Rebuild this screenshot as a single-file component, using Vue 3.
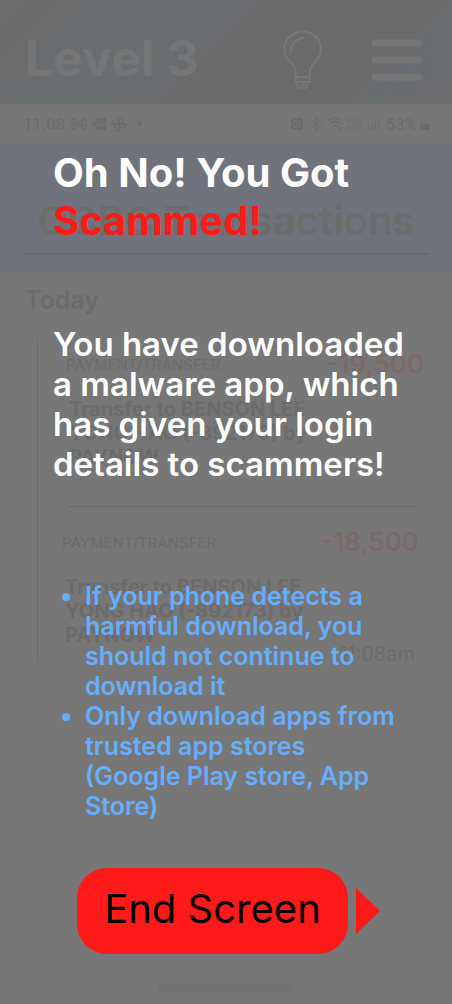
<script setup>
const transactions = [
  { id: 1, amount: '-19,500', time: '' },
  { id: 2, amount: '-18,500', time: '11:08am' },
]

const tips = [
  'If your phone detects a harmful download, you should not continue to download it',
  'Only download apps from trusted app stores (Google Play store, App Store)',
]
</script>

<template>
  <div class="screen">
    <div class="backdrop">
      <header class="topbar">
        <h2 class="level">Level 3</h2>
        <button class="icon-button bulb-button" type="button" aria-label="Hint">
          <svg class="bulb" viewBox="0 -1 40 60" fill="none" stroke="currentColor" stroke-width="2" stroke-linecap="round" stroke-linejoin="round">
            <path d="M12.500 46V40C12.500 36 9 33 6 30C-1 22 0 11 7 5.500C15-1 25-1 32 5C39 11 40 22 33 30C30 34 27 36 27 40V46L26 52L23 57H16L13 52Z" />
            <path d="M13 46H27M13 51H26M18 54H22" />
            <path d="M8 21C8 13 13 8 20 7" />
          </svg>
        </button>
        <button class="icon-button" type="button" aria-label="Menu">
          <svg class="menu" viewBox="0 0 52 42" stroke="currentColor" stroke-width="7" stroke-linecap="round">
            <path d="M4 4H48M4 21H48M4 38H48" />
          </svg>
        </button>
      </header>

      <div class="status">
        <div class="status-group">
          <span class="clock">11:08</span>
          <svg class="status-icon" viewBox="0 0 16 16" fill="none" stroke="currentColor" stroke-width="1.300">
            <path d="M1 13V3H3L8 8L13 3H15V13H12V8L8 11L4 8V13Z" />
          </svg>
          <svg class="status-icon" viewBox="0 0 16 16">
            <path d="M5 2H15V14H5V11H1V5H5Z" fill="currentColor" />
            <circle cx="4" cy="8" r="2" fill="none" stroke="#777" />
            <path d="M8 8L12 10L15 7" fill="none" stroke="#777" />
          </svg>
          <svg class="status-icon" viewBox="0 0 16 16" fill="none" stroke="currentColor" stroke-width="1.300">
            <path d="M8 8V1C12 1 13 5 11 8ZM8 8H15C15 12 11 13 8 11ZM8 8V15C4 15 3 11 5 8ZM8 8H1C1 4 5 3 8 5Z" />
          </svg>
          <span class="dot"></span>
        </div>
        <div class="status-group status-right">
          <svg class="status-icon" viewBox="0 0 16 16">
            <path d="M3 2L13 2L14 5V12L12 14H4L2 12V5Z" fill="currentColor" />
            <circle cx="8" cy="8" r="4" fill="none" stroke="#777" />
            <path d="M8 5V8H11" fill="none" stroke="#777" />
          </svg>
          <svg class="status-icon" viewBox="0 0 16 16" fill="none" stroke="currentColor" stroke-width="1.300">
            <path d="M4 4L12 11L8 15V1L12 5L4 12M1 8H3M13 8H15" />
          </svg>
          <svg class="status-icon" viewBox="0 0 16 16" fill="none" stroke="currentColor" stroke-width="1.300">
            <path d="M1 5C5 1 11 1 15 5M3 8C6 5 10 5 13 8M5 11C7 9 9 9 11 11M8 13V14M12 11V15M14 11V15" />
          </svg>
          <span class="carrier"><span>Vo))</span><span>LTE1</span></span>
          <svg class="status-icon" viewBox="0 0 16 16" fill="currentColor">
            <path d="M3 11H4V14H3ZM6 8H7V14H6ZM9 5H10V14H9ZM12 2H13V14H12Z" />
          </svg>
          <span class="battery-text">53%</span>
          <svg class="battery" viewBox="0 0 10 14" fill="currentColor">
            <path d="M0 7H10V12Q10 13 9 13H1Q0 13 0 12Z" />
            <path d="M3 1H7V3H9V7H1V3H3Z" opacity=".35" />
          </svg>
        </div>
      </div>

      <div class="bank">
        <h2 class="bank-title">OCBC Transactions</h2>
      </div>

      <h3 class="today">Today</h3>
      <ul class="transactions">
        <li v-for="item in transactions" :key="item.id" class="transaction">
          <div class="transaction-head">
            <span class="kind">PAYMENT/TRANSFER</span>
            <span class="amount">{{ item.amount }}</span>
          </div>
          <p class="detail">Transfer to BENSON LEE YONG HAO (-892173) by PAYNOW</p>
          <span v-if="item.time" class="time">{{ item.time }}</span>
        </li>
      </ul>
      <div class="home-bar"></div>
    </div>

    <main class="result">
      <h1 class="title">Oh No! You Got <span class="danger">Scammed!</span></h1>
      <p class="message">You have downloaded a malware app, which has given your login details to scammers!</p>
      <ul class="tips">
        <li v-for="tip in tips" :key="tip">{{ tip }}</li>
      </ul>
      <div class="actions">
        <button class="end" type="button">End Screen</button>
        <svg class="arrow" viewBox="0 0 24 46" aria-hidden="true">
          <path d="M0 0L24 23L0 46Z" fill="#ff1a1a" />
        </svg>
      </div>
    </main>
  </div>
</template>

<style>
body {
  background: #777777;
}
</style>

<style scoped>
.screen {
  display: grid;
  min-height: 100vh;
  background: #777777;
  font-family: Inter, "Liberation Sans", sans-serif;
}

.backdrop,
.result {
  grid-area: 1 / 1;
  min-width: 0;
}

h1, h2, h3, p, ul {
  margin: 0;
  padding: 0;
}

button {
  border: 0;
  font: inherit;
}

.backdrop {
  display: flex;
  flex-direction: column;
  color: #6c6c6c;
}

.topbar {
  display: flex;
  align-items: center;
  height: 104px;
  padding: 0 15px 0 25px;
  background: linear-gradient(135deg, #6c6b6d 0%, #6b6c6e 16%, #696e71 23%, #696e71 38%, #6b6b6d 50%, #6b6b6d 80%, #696e71 86%, #6b6c6e 100%);
  color: #767676;
}

.level {
  flex: 1;
  padding-top: 12px;
  font-size: 50px;
  line-height: 60px;
  font-weight: 700;
}

.icon-button {
  display: flex;
  align-items: center;
  justify-content: center;
  width: 80px;
  height: 72px;
  padding: 0;
  border-radius: 16px;
  background: rgba(106, 106, 110, 0.3);
  color: #767676;
}

.bulb-button {
  margin-right: 14px;
}

.topbar .icon-button {
  margin-top: 16px;
}

.bulb {
  width: 40px;
  height: 60px;
}

.menu {
  width: 52px;
  height: 42px;
}

.status {
  display: flex;
  justify-content: space-between;
  align-items: center;
  height: 39px;
  padding: 0 22px 0 23px;
  font-family: Roboto, sans-serif;
}

.status-group {
  display: flex;
  align-items: center;
  gap: 4px;
}

.status-right {
  gap: 3px;
}

.clock {
  margin-right: 2px;
}

.clock,
.battery-text {
  font-size: 17px;
}

.status-icon {
  width: 16px;
  height: 16px;
}

.dot {
  width: 5px;
  height: 5px;
  margin-left: 6px;
  border-radius: 50%;
  background: currentColor;
}

.carrier {
  display: flex;
  flex-direction: column;
  font-size: 8px;
  line-height: 7px;
}

.battery {
  width: 10px;
  height: 14px;
}

.bank {
  height: 130px;
  padding: 0 23px;
  background: #70737b;
}

.bank-title {
  padding: 54px 0 8px;
  border-bottom: 2px solid #6b6b6c;
  font-size: 40px;
  line-height: 48px;
  font-weight: 600;
  text-align: center;
  white-space: nowrap;
}

.today {
  padding: 12px 25px 0;
  font-size: 25px;
  line-height: 30px;
  font-weight: 600;
}

.transactions {
  margin: 25px 0 0 37px;
  border-left: 1px solid #6a6a6a;
  list-style: none;
}

.transaction {
  padding: 8px 32px 37px 31px;
}

.transaction + .transaction {
  position: relative;
  padding: 20px 37px 0 27px;
}

.transaction + .transaction::before {
  position: absolute;
  top: 0;
  right: 37px;
  left: 31px;
  height: 1px;
  background: #696969;
  content: "";
}

.transaction-head {
  display: flex;
  justify-content: space-between;
  align-items: center;
  margin: 0 -4px 0 -3px;
}

.kind {
  font-size: 15px;
}

.amount {
  color: #7c6a6a;
  font-size: 26px;
  line-height: 32px;
  font-weight: 600;
}

.detail {
  max-width: 250px;
  padding-top: 17px;
  font-size: 20px;
  line-height: 24px;
  font-weight: 700;
}

.time {
  display: block;
  font-size: 20px;
  line-height: 14px;
  text-align: right;
}

.home-bar {
  width: 136px;
  height: 8px;
  margin: auto auto 12px;
  border-radius: 3px;
  background: #737373;
}

.result {
  z-index: 1;
  padding: 149px 48px 48px 53px;
}

.title {
  color: #ffffff;
  font-size: 40px;
  line-height: 48px;
  font-weight: 700;
}

.danger {
  color: #ff1a1a;
}

.message {
  padding-top: 79px;
  color: #ffffff;
  font-size: 33px;
  line-height: 40px;
  font-weight: 600;
}

.tips {
  padding: 97px 0 0 32px;
  color: #66adff;
  font-size: 25px;
  line-height: 30px;
  font-weight: 600;
}

.actions {
  display: flex;
  justify-content: center;
  align-items: center;
  gap: 8px;
  padding-top: 47px;
}

.end {
  height: 86px;
  padding: 0 27px 4px;
  border-radius: 30px;
  background: #ff1a1a;
  color: #000000;
  font-size: 40px;
  line-height: 48px;
  white-space: nowrap;
}

.arrow {
  width: 24px;
  height: 46px;
}
</style>
